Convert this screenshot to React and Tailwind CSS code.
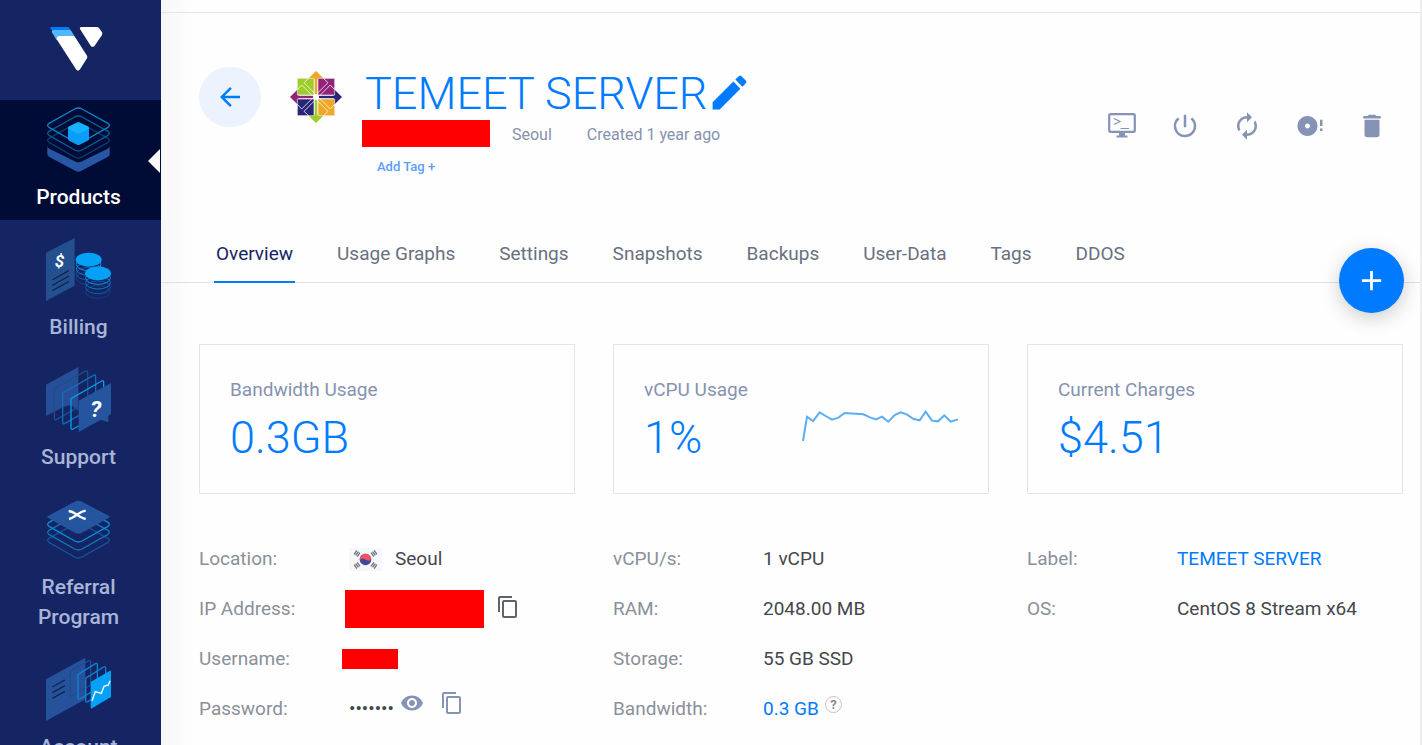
import React, { useState } from 'react';
import {
  MdAdd,
  MdArrowBack,
  MdAutorenew,
  MdContentCopy,
  MdDelete,
  MdDiscFull,
  MdEdit,
  MdPowerSettingsNew,
  MdVisibility,
} from 'react-icons/md';

const TABS = ['Overview', 'Usage Graphs', 'Settings', 'Snapshots', 'Backups', 'User-Data', 'Tags', 'DDOS'];

function Logo() {
  return (
    <svg viewBox="149 81 174 132" className="w-[58px] h-11" aria-hidden="true">
      <path d="M152 81H202Q205 81 207 84L213 93H157L149 84Q149 81 152 81Z" fill="#007bfc" />
      <path d="M159 90H208Q211 90 213 93L224 111H176L168 119L154 95Q155 90 159 90Z" fill="#51b9ff" />
      <path d="M176 108H219Q222 108 224 111L260 167Q262 171 260 175L239 208Q233 216 227 208L169 118Q168 109 176 108Z" fill="#fff" />
      <path d="M242 81H290Q294 81 296 84L305 97Q307 101 305 105L283 137Q277 144 271 137L239 87Q237 81 242 81Z" fill="#fff" />
    </svg>
  );
}

// Rounded isometric tile used by the stacked icons
function Tile({ y = 0, ...rest }) {
  return (
    <path
      transform={`translate(0 ${y})`}
      d="M147 370L224 327Q235 321 246 327L324 370Q332 376 324 382L246 426Q235 432 224 426L147 382Q139 376 147 370Z"
      strokeWidth="4"
      fill="none"
      {...rest}
    />
  );
}

function ProductsIcon() {
  return (
    <svg viewBox="132 324 207 192" className="w-[69px] h-16 overflow-visible" aria-hidden="true">
      <path d="M142 437V462Q142 468 148 471L227 513Q235 517 243 513L323 471Q329 468 329 462V437Q329 442 323 446L243 485Q235 489 227 485L148 446Q142 442 142 437Z" fill="#2756a5" />
      <Tile y={45} stroke="#04416f" />
      <Tile y={24} stroke="#046095" />
      <Tile stroke="#0a86cb" />
      <path d="M231 368Q235 366 239 368L263 379Q267 381 267 385V417Q267 420 263 422L239 434Q235 436 231 434L208 422Q204 420 204 417V385Q204 381 208 379Z" fill="#0a9ef7" />
      <path d="M231 368Q235 366 239 368L266 381V387L239 400Q235 402 231 400L205 387V381Z" fill="#17b1ff" />
    </svg>
  );
}

function Coin({ cx, cy }) {
  const rings = ['#14407f', '#105da1', '#0b7cc4', '#0794e4'];
  return (
    <g fill="none" strokeWidth="3">
      {rings.map((color, i) => (
        <ellipse key={color} cx={cx} cy={cy + 56 - i * 14} rx="37" ry="19" stroke={color} />
      ))}
      <ellipse cx={cx} cy={cy} rx="39" ry="21" fill="#04a1f7" />
    </g>
  );
}

function BillingIcon() {
  return (
    <svg viewBox="132 54 207 192" className="w-[69px] h-16 overflow-visible" aria-hidden="true">
      <path d="M138 98L224 54V197L138 243Z" fill="#24508f" />
      <text x="164" y="142" fontSize="51" fontWeight="700" fontStyle="italic" fontFamily="Roboto, sans-serif" fill="#fff">$</text>
      <path d="M157 180L207 152M157 196L207 168M157 212L207 184" stroke="#122350" strokeWidth="4" />
      <Coin cx={266} cy={119} />
      <path d="M256 160V216Q270 238 294 236Q320 236 332 216V160Z" fill="#152463" />
      <Coin cx={294} cy={160} />
    </svg>
  );
}

function SupportIcon() {
  return (
    <svg viewBox="132 444 207 192" className="w-[69px] h-16 overflow-visible" aria-hidden="true">
      <path d="M138 494L235 441V572L213 556L200 558L186 563L138 588Z" fill="#264f98" />
      <g fill="none" strokeWidth="4" strokeLinejoin="round">
        <path d="M163 506L257 453Q263 451 263 458V545L170 598Q163 602 163 594Z" stroke="#1a4f8c" />
        <path d="M188 519L281 466Q287 463 287 470V558L195 610Q188 614 188 606Z" stroke="#126fb5" />
        <path d="M213 536L305 483Q311 480 311 487V575L220 627Q213 631 213 622Z" stroke="#089be9" />
      </g>
      <path d="M236 542L333 489V582L325 587V607L302 599L236 636Z" fill="#26559f" />
      <text x="271" y="590" fontSize="68" fontWeight="700" fontStyle="italic" fontFamily="Roboto, sans-serif" fill="#fff">?</text>
    </svg>
  );
}

function ReferralIcon() {
  return (
    <svg viewBox="132 54 207 192" className="w-[69px] h-16 overflow-visible" aria-hidden="true">
      <Tile y={-195} stroke="#15559a" />
      <Tile y={-219} stroke="#0d78bd" />
      <Tile y={-243} stroke="#0890de" />
      <path d="M144 108L224 65Q235 59 246 65L327 108Q331 110 327 113L246 158Q235 164 224 158L144 113Q139 110 144 108Z" fill="#26559f" />
      <path d="M206 93Q217 94 229 103L240 110Q247 115 257 117M257 92Q246 94 234 102L222 110Q216 115 207 117" stroke="#fff" strokeWidth="7" fill="none" />
    </svg>
  );
}

function AccountIcon() {
  return (
    <svg viewBox="132 534 207 192" className="w-[69px] h-16 overflow-visible" aria-hidden="true">
      <path d="M138 598L256 533V658L138 723Z" fill="#26529c" />
      <path d="M157 621L195 600M157 638L195 617M157 655L195 634" stroke="#122350" strokeWidth="4" />
      <g fill="none" strokeWidth="4" strokeLinejoin="round">
        <path d="M211 577Q211 573 215 571L267 542Q272 540 272 545V615L217 648Q211 651 211 645Z" stroke="#1c4d8d" />
        <path d="M234 587Q234 583 238 581L286 551Q292 548 292 554V625L240 657Q234 660 234 654Z" stroke="#0e83cf" />
        <path d="M257 599Q257 595 261 592L311 561Q317 558 317 564V635L263 665Q257 668 257 662Z" stroke="#0e83cf" />
      </g>
      <path d="M272 606L330 572Q333 571 333 575V651L276 685Q272 687 272 682Z" fill="#04a1f7" />
      <path d="M276 662L286 635L304 640L312 619L325 615L330 602" stroke="#fff" strokeWidth="4" fill="none" />
    </svg>
  );
}

const NAV = [
  { label: 'Products', Icon: ProductsIcon, active: true },
  { label: 'Billing', Icon: BillingIcon },
  { label: 'Support', Icon: SupportIcon },
  { label: 'Referral Program', Icon: ReferralIcon },
  { label: 'Account', Icon: AccountIcon },
];

function Sidebar() {
  return (
    <aside className="w-[161px] shrink-0 bg-[#152463] overflow-hidden">
      <a href="#home" aria-label="Home" className="flex justify-center h-[100px] pt-[27px] pr-1">
        <Logo />
      </a>
      <nav className="flex flex-col gap-2.5">
        {NAV.map(({ label, Icon, active }) => (
          <a
            key={label}
            href={`#${label}`}
            className={`relative flex flex-col items-center gap-2.5 py-2 pl-5 pr-6 text-[21px] leading-[30px] font-medium text-center ${
              active ? 'bg-[#000b36] text-white' : 'text-[#a9b5d8]'
            }`}
          >
            <Icon />
            <span>{label}</span>
            {active && (
              <svg viewBox="0 0 12 24" className="absolute right-px top-[49px] w-3 h-6" aria-hidden="true">
                <path d="M12 0V24L0 12Z" fill="#f8f8f8" />
              </svg>
            )}
          </a>
        ))}
      </nav>
    </aside>
  );
}

function CentosLogo() {
  return (
    <svg viewBox="-78 -78 156 156" className="w-[52px] h-[52px]" role="img" aria-label="CentOS">
      <path d="M0 -78L25 -53H4V0H-4V-53H-25Z" fill="#efa724" />
      <path d="M78 0L53 25V4H0V-4H53V-25Z" fill="#262577" />
      <path d="M0 78L-25 53H-4V0H4V53H25Z" fill="#9ccd2a" />
      <path d="M-78 0L-53 -25V-4H0V4H-53V25Z" fill="#932279" />
      <g stroke="#f3e9ee" strokeWidth="2">
        <path d="M-56 -56H-6V-6H-56Z" fill="#9ccd2a" />
        <path d="M6 -56H56V-6H6Z" fill="#932279" />
        <path d="M-56 6H-6V56H-56Z" fill="#262577" />
        <path d="M6 6H56V56H6Z" fill="#efa724" />
      </g>
      <g stroke="#fff" strokeOpacity="0.75" strokeWidth="3" fill="none">
        <path d="M-22 -56L-36 -43L0 -7L36 -43L22 -56" />
        <path d="M56 -22L43 -36L7 0L43 36L56 22" />
        <path d="M22 56L36 43L0 7L-36 43L-22 56" />
        <path d="M-56 22L-43 36L-7 0L-43 -36L-56 -22" />
      </g>
      <path d="M0 -52V-8" stroke="#efa724" strokeWidth="6" />
      <path d="M52 0H8" stroke="#262577" strokeWidth="6" />
      <path d="M0 52V8" stroke="#9ccd2a" strokeWidth="6" />
      <path d="M-52 0H-8" stroke="#932279" strokeWidth="6" />
      <circle r="9" fill="#fff" />
    </svg>
  );
}

function ConsoleIcon() {
  return (
    <svg viewBox="0 0 30 30" className="w-[30px] h-[30px]" fill="none" stroke="currentColor" aria-hidden="true">
      <rect x="2.2" y="3.2" width="25.6" height="17.6" rx="1.5" strokeWidth="2.2" />
      <path d="M7 7.5L13 10.5L7 13.5" strokeWidth="1.2" />
      <path d="M13.5 17.5H22" strokeWidth="1" />
      <path d="M12 21H18V24.5H20.5V26.5H9.5V24.5H12Z" fill="currentColor" stroke="none" />
    </svg>
  );
}

const ACTIONS = [
  { label: 'View Console', Icon: ConsoleIcon },
  { label: 'Server Stop', Icon: MdPowerSettingsNew },
  { label: 'Server Restart', Icon: MdAutorenew },
  { label: 'Server Reinstall', Icon: MdDiscFull },
  { label: 'Server Destroy', Icon: MdDelete },
];

function Header() {
  return (
    <header className="flex items-start pl-[38px] pr-[33px] pt-[54px]">
      <button aria-label="Back" className="flex items-center justify-center w-[62px] h-[60px] rounded-full bg-[#ecf3ff] text-[#007bff]">
        <MdArrowBack className="w-[30px] h-[30px]" />
      </button>
      <div className="ml-[29px] mt-1">
        <CentosLogo />
      </div>
      <div className="ml-5">
        <div className="flex items-center pl-[3px] text-[#007bff]">
          <h1 className="text-[45px] leading-[54px] font-light">TEMEET SERVER</h1>
          <button aria-label="Edit label" className="mb-1">
            <MdEdit className="w-[45px] h-[45px]" />
          </button>
        </div>
        <div className="flex items-center h-7 text-base text-[#8592ad]">
          <span className="mb-1 w-32 h-[27px] bg-[#ff0000]"></span>
          <span className="ml-[22px]">Seoul</span>
          <span className="ml-[35px]">Created 1 year ago</span>
        </div>
        <button className="pl-[15px] text-[13px] leading-9 font-medium text-[#5c9dff]">Add Tag +</button>
      </div>
      <div className="flex items-center justify-between self-center ml-auto w-[280px] text-[#8793b5]">
        {ACTIONS.map(({ label, Icon }) => (
          <button key={label} title={label} aria-label={label}>
            <Icon className="w-[30px] h-[30px]" />
          </button>
        ))}
      </div>
    </header>
  );
}

function Sparkline() {
  return (
    <svg viewBox="0 0 480 96" className="w-40 h-8 mt-1.5" aria-hidden="true">
      <polyline
        points="9,93 21,20 39,33 59,7 77,18 96,29 115,23 134,9 190,13 210,22 228,28 246,20 265,35 284,15 302,7 320,13 341,27 359,31 377,5 396,32 414,34 433,16 452,35 474,28"
        fill="none"
        stroke="#5caef2"
        strokeWidth="6"
      />
    </svg>
  );
}

function StatCard({ label, value, children }) {
  return (
    <div className="border border-[#e4e5e9] pt-[31px] pb-[21px] pl-[30px] pr-7">
      <div className="text-[19px] leading-7 text-[#8592b0]">{label}</div>
      <div className="flex items-start justify-between">
        <div className="text-[45px] leading-[68px] font-light text-[#007bff]">{value}</div>
        {children}
      </div>
    </div>
  );
}

function Row({ label, children }) {
  return (
    <div className="flex items-center h-[50px]">
      <dt className="w-[150px] shrink-0 text-[#8a9099]">{label}</dt>
      <dd className="flex items-center text-[#45474c]">{children}</dd>
    </div>
  );
}

function KoreaFlag() {
  const bars = [
    [8, 5.5, -55],
    [25, 5.5, 55],
    [8, 17.5, 55],
    [25, 17.5, -55],
  ];
  return (
    <svg viewBox="0 0 33 23" className="w-[33px] h-[23px]" role="img" aria-label="South Korea">
      <rect width="33" height="23" fill="#f5f7fb" />
      {bars.map(([x, y, angle]) => (
        <g key={`${x}-${y}`} transform={`translate(${x} ${y}) rotate(${angle})`} stroke="#6f747c" strokeWidth="1.3">
          <path d="M-2.4 -1.900H2.4M-2.4 0H2.4M-2.4 1.900H2.4" />
        </g>
      ))}
      <circle cx="16.5" cy="11.5" r="5.8" fill="#41479b" />
      <path d="M10.7 12.500A5.8 5.8 0 0 1 22.2 10.500Q21 13.500 18.500 12.500L14.500 10.800Q12 10 10.700 12.500Z" fill="#ef5361" />
    </svg>
  );
}

export default function App() {
  const [tab, setTab] = useState('Overview');

  return (
    <div className="flex h-screen overflow-hidden bg-white font-[Roboto,sans-serif]">
      <Sidebar />
      <main className="relative flex-1 min-w-0 border-r-2 border-[#efefef] bg-[linear-gradient(to_right,#f7f7f7,#fefefe_32px)]">
        <div className="h-[13px] border-b border-[#e4e5e9]"></div>
        <Header />

        <div className="relative mt-[55px] border-b border-[#e1e2e8]">
          <nav className="flex gap-10 pl-[53px]">
            {TABS.map((name) => (
              <button
                key={name}
                onClick={() => setTab(name)}
                className={`-mb-px px-0.5 pb-[13px] text-[19px] leading-7 border-b-2 whitespace-nowrap ${
                  tab === name ? 'text-[#152463] border-[#007bff]' : 'text-[#69707f] border-transparent'
                }`}
              >
                {name}
              </button>
            ))}
          </nav>
          <button
            aria-label="Deploy"
            className="absolute right-4 top-2 flex items-center justify-center w-[65px] h-[65px] rounded-full bg-[#007bff] text-white shadow-[0_5px_20px_rgba(0,0,0,0.2)]"
          >
            <MdAdd className="w-[33px] h-[33px]" />
          </button>
        </div>

        <section className="grid grid-cols-3 gap-x-[38px] pl-[38px] pr-[17px] mt-[61px]">
          <StatCard label="Bandwidth Usage" value="0.3GB" />
          <StatCard label="vCPU Usage" value="1%">
            <Sparkline />
          </StatCard>
          <StatCard label="Current Charges" value="$4.51" />
        </section>

        <section className="grid grid-cols-3 gap-x-[38px] pl-[38px] pr-[17px] mt-10 text-[19px] leading-7">
          <dl>
            <Row label="Location:">
              <KoreaFlag />
              <span className="ml-[13px]">Seoul</span>
            </Row>
            <Row label="IP Address:">
              <span className="-ml-1 w-[139px] h-[38px] bg-[#ff0000]"></span>
              <button aria-label="Copy IP address" className="ml-3 mb-1 text-[#5f646c]">
                <MdContentCopy className="w-6 h-6" />
              </button>
            </Row>
            <Row label="Username:">
              <span className="-ml-[7px] w-14 h-5 bg-[#ff0000]"></span>
            </Row>
            <Row label="Password:">
              <span>•••••••</span>
              <button aria-label="Show password" className="ml-1.5 mb-3 text-[#8793b5]">
                <MdVisibility className="w-6 h-6" />
              </button>
              <button aria-label="Copy password" className="ml-4 mb-3 text-[#8793b5]">
                <MdContentCopy className="w-6 h-6" />
              </button>
            </Row>
          </dl>
          <dl>
            <Row label="vCPU/s:">1 vCPU</Row>
            <Row label="RAM:">2048.00 MB</Row>
            <Row label="Storage:">55 GB SSD</Row>
            <Row label="Bandwidth:">
              <a href="#bandwidth" className="text-[#007bff]">0.3 GB</a>
              <button
                aria-label="Bandwidth help"
                className="flex items-center justify-center ml-1.5 mb-2.5 w-[17px] h-[17px] rounded-full border border-[#c0c3c8] text-[13px] leading-none font-bold text-[#858b94]"
              >
                ?
              </button>
            </Row>
          </dl>
          <dl>
            <Row label="Label:">
              <a href="#label" className="text-[#007bff]">TEMEET SERVER</a>
            </Row>
            <Row label="OS:">CentOS 8 Stream x64</Row>
          </dl>
        </section>
      </main>
    </div>
  );
}
